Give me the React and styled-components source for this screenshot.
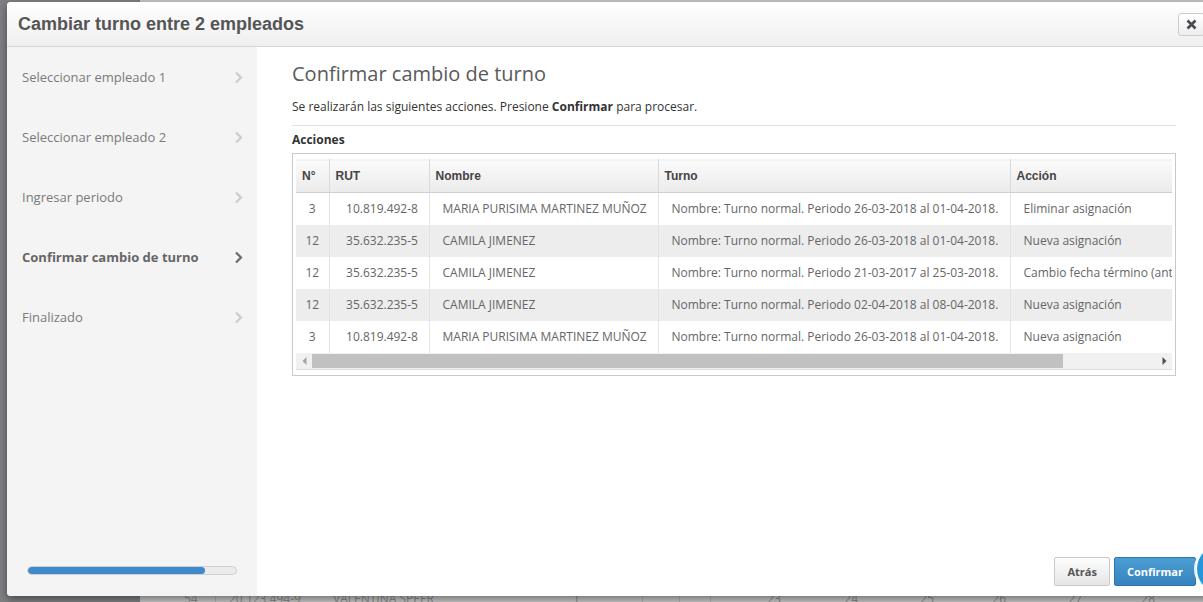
import React from 'react';
import styled, { createGlobalStyle } from 'styled-components';

const GlobalStyle = createGlobalStyle`
  html, body {
    margin: 0;
    padding: 0;
  }
  body {
    width: 1203px;
    height: 602px;
    overflow: hidden;
    font-family: "Open Sans", "Liberation Sans", sans-serif;
  }
  * {
    box-sizing: border-box;
  }
`;

// Página de fondo (bajo el overlay)
const Page = styled.div`
  position: relative;
  display: flex;
  width: 1203px;
  height: 602px;
  overflow: hidden;
  background: #c8c8c8;
`;

const BgSide = styled.div`
  width: 140px;
  flex-shrink: 0;
  background: #7e8083;
`;

const BgContent = styled.div`
  flex: 1;
  display: flex;
  flex-direction: column;
  justify-content: flex-end;
`;

const BgRow = styled.div`
  display: flex;
  height: 16px;
  margin-left: 32px;
  border-top: 1px solid #b6b6b6;
  font-family: "Open Sans", sans-serif;
  font-size: 12px;
  color: #8a8a8a;
  line-height: 23px;
  overflow: hidden;
`;

const BgCell = styled.div`
  width: ${p => p.w}px;
  flex-shrink: 0;
  padding-left: ${p => p.pl || 0}px;
  border-right: ${p => (p.line ? '1px solid #b0b0b0' : 'none')};
  text-align: ${p => p.align || 'left'};
`;

// Modal
const Modal = styled.div`
  position: absolute;
  left: 7px;
  top: 2px;
  width: 1204px;
  height: 594px;
  background: #fff;
  border-radius: 4px;
  box-shadow: 0 3px 9px rgba(0, 0, 0, 0.45);
  display: flex;
  flex-direction: column;
  overflow: hidden;
`;

const Header = styled.div`
  height: 45px;
  flex-shrink: 0;
  display: flex;
  align-items: center;
  justify-content: space-between;
  padding: 0 6px 0 11px;
  background: linear-gradient(#ffffff, #efefef);
  border-bottom: 1px solid #d6d6d6;
`;

const HeaderTitle = styled.h4`
  margin: 0;
  font-family: "Liberation Sans", Arial, sans-serif;
  font-size: 18px;
  font-weight: bold;
  color: #555;
`;

const CloseButton = styled.button`
  width: 27px;
  height: 23px;
  padding: 0;
  margin-top: 1px;
  display: flex;
  align-items: center;
  justify-content: center;
  border: 1px solid #ccc;
  border-radius: 3px;
  background: linear-gradient(#ffffff, #ededed);
`;

const Body = styled.div`
  flex: 1;
  display: flex;
  min-height: 0;
`;

const Sidebar = styled.div`
  width: 250px;
  flex-shrink: 0;
  background: #f4f4f4;
  display: flex;
  flex-direction: column;
  justify-content: space-between;
`;

const StepList = styled.div`
  display: flex;
  flex-direction: column;
`;

const Step = styled.div`
  height: 60px;
  display: flex;
  align-items: center;
  justify-content: space-between;
  padding: 0 14px 0 15px;
  font-size: 13px;
  font-weight: ${p => (p.active ? 700 : 400)};
  color: ${p => (p.active ? '#666' : '#7a7a7a')};
`;

const Progress = styled.div`
  margin: 0 20px 21px;
  height: 9px;
  border: 1px solid #cfcfcf;
  border-radius: 5px;
  background: #ebebeb;
  overflow: hidden;
`;

const ProgressFill = styled.div`
  height: 100%;
  background: #3d89c9;
  border-radius: 4px;
`;

const Main = styled.div`
  flex: 1;
  display: flex;
  flex-direction: column;
  min-width: 0;
`;

const Content = styled.div`
  padding: 15px 35px 0;
`;

const Title = styled.h3`
  margin: 0;
  font-size: 20px;
  line-height: 24px;
  font-weight: 400;
  color: #5a5a5a;
`;

const Lead = styled.p`
  margin: 12px 0 0;
  font-size: 12px;
  line-height: 18px;
  color: #333;
`;

const Rule = styled.hr`
  margin: 9px 0 0;
  border: 0;
  border-top: 1px solid #e2e2e2;
`;

const SectionLabel = styled.div`
  margin-top: 6px;
  font-size: 12px;
  line-height: 16px;
  font-weight: 700;
  color: #333;
`;

const TableBox = styled.div`
  margin-top: 5px;
  border: 1px solid #c9c9c9;
  padding: 5px 3px 5px;
`;

const TableScroll = styled.div`
  overflow: hidden;
`;

const Table = styled.table`
  width: 990px;
  border-collapse: collapse;
  table-layout: fixed;
`;

const Th = styled.th`
  height: 33px;
  padding: 0 6px;
  text-align: left;
  font-family: "Liberation Sans", Arial, sans-serif;
  font-size: 12px;
  font-weight: bold;
  color: #444;
  background: linear-gradient(#fbfbfb, #ebebeb);
  border-right: 1px solid #dadada;
  border-bottom: 1px solid #cfcfcf;
  border-top: 1px solid #f4f4f4;
`;

const Tr = styled.tr`
  background: ${p => (p.striped ? '#ededed' : '#fff')};
`;

const Td = styled.td`
  height: 32px;
  padding: 0 ${p => (p.center ? 4 : 13)}px 0 ${p => p.pl || (p.center ? 4 : 13)}px;
  text-align: ${p => (p.center ? 'center' : 'left')};
  font-size: 12px;
  color: #666;
  white-space: nowrap;
  overflow: hidden;
  border-right: 1px solid #e3e3e3;
`;

const ScrollBar = styled.div`
  height: 17px;
  display: flex;
  align-items: center;
  background: #f1f1f1;
  border-bottom: 1px solid #dcdcdc;
`;

const ScrollArrow = styled.div`
  width: 16px;
  height: 100%;
  display: flex;
  align-items: center;
  justify-content: center;
`;

const ScrollTrack = styled.div`
  flex: 1;
  height: 100%;
  display: flex;
  align-items: center;
`;

const ScrollThumb = styled.div`
  height: 14px;
  background: #c1c1c1;
`;

const Footer = styled.div`
  margin-top: auto;
  display: flex;
  justify-content: flex-end;
  gap: 4px;
  padding: 0 15px 10px;
`;

const Button = styled.button`
  height: 29px;
  padding: 0 12px;
  font-family: "Open Sans", sans-serif;
  font-size: 11px;
  font-weight: 700;
  border-radius: 2px;
  border: 1px solid ${p => (p.primary ? '#2f73aa' : '#cacaca')};
  color: ${p => (p.primary ? '#fff' : '#555')};
  background: ${p =>
    p.primary
      ? 'linear-gradient(#4b9ed3, #3683bf)'
      : 'linear-gradient(#fdfdfd, #e6e6e6)'};
`;

const HelpBubble = styled.div`
  position: absolute;
  left: 1197px;
  top: 545px;
  width: 48px;
  height: 48px;
  border-radius: 50%;
  background: #2596db;
  box-shadow: -1px 0 0 2px rgba(255, 255, 255, 0.9);
`;

const Chevron = ({ color }) => (
  <svg width="9" height="13" viewBox="0 0 9 13">
    <path d="M2 1.5l5 5-5 5" fill="none" stroke={color} strokeWidth="2.2" />
  </svg>
);

const CloseIcon = () => (
  <svg width="11" height="11" viewBox="0 0 11 11">
    <path d="M1.5 1.5l8 8M9.5 1.5l-8 8" stroke="#4a4a52" strokeWidth="2.6" />
  </svg>
);

const Triangle = ({ dir, color }) => (
  <svg width="5" height="8" viewBox="0 0 5 8">
    <path d={dir === 'left' ? 'M4.5 0v8L0.5 4z' : 'M0.5 0v8L4.5 4z'} fill={color} />
  </svg>
);

const steps = [
  'Seleccionar empleado 1',
  'Seleccionar empleado 2',
  'Ingresar periodo',
  'Confirmar cambio de turno',
  'Finalizado',
];

const rows = [
  ['3', '10.819.492-8', 'MARIA PURISIMA MARTINEZ MUÑOZ', 'Nombre: Turno normal. Periodo 26-03-2018 al 01-04-2018.', 'Eliminar asignación'],
  ['12', '35.632.235-5', 'CAMILA JIMENEZ', 'Nombre: Turno normal. Periodo 26-03-2018 al 01-04-2018.', 'Nueva asignación'],
  ['12', '35.632.235-5', 'CAMILA JIMENEZ', 'Nombre: Turno normal. Periodo 21-03-2017 al 25-03-2018.', 'Cambio fecha término (anterior)'],
  ['12', '35.632.235-5', 'CAMILA JIMENEZ', 'Nombre: Turno normal. Periodo 02-04-2018 al 08-04-2018.', 'Nueva asignación'],
  ['3', '10.819.492-8', 'MARIA PURISIMA MARTINEZ MUÑOZ', 'Nombre: Turno normal. Periodo 26-03-2018 al 01-04-2018.', 'Nueva asignación'],
];

const App = () => {
  const activeStep = 3;

  return (
    <>
      <GlobalStyle />
      <Page>
        <BgSide />
        <BgContent>
          <BgRow>
            <BgCell w={44} pl={12} line>54</BgCell>
            <BgCell w={117} pl={13}>20.123.494-9</BgCell>
            <BgCell w={240}>VALENTINA SPEER</BgCell>
            <BgCell w={70} line>1</BgCell>
            <BgCell w={37} line />
            <BgCell w={31} line />
            <BgCell w={70} align="right">23</BgCell>
            <BgCell w={77} align="right">24</BgCell>
            <BgCell w={76} align="right">25</BgCell>
            <BgCell w={72} align="right">26</BgCell>
            <BgCell w={76} align="right">27</BgCell>
            <BgCell w={73} align="right">28</BgCell>
          </BgRow>
        </BgContent>

        <Modal>
          <Header>
            <HeaderTitle>Cambiar turno entre 2 empleados</HeaderTitle>
            <CloseButton>
              <CloseIcon />
            </CloseButton>
          </Header>
          <Body>
            <Sidebar>
              <StepList>
                {steps.map((s, i) => (
                  <Step key={s} active={i === activeStep}>
                    {s}
                    <Chevron color={i === activeStep ? '#6a6a6a' : '#cccccc'} />
                  </Step>
                ))}
              </StepList>
              <Progress>
                <ProgressFill style={{ width: '85%' }} />
              </Progress>
            </Sidebar>

            <Main>
              <Content>
                <Title>Confirmar cambio de turno</Title>
                <Lead>
                  Se realizarán las siguientes acciones. Presione <b>Confirmar</b> para procesar.
                </Lead>
                <Rule />
                <SectionLabel>Acciones</SectionLabel>
                <TableBox>
                  <TableScroll>
                    <Table>
                      <colgroup>
                        <col style={{ width: 33 }} />
                        <col style={{ width: 100 }} />
                        <col style={{ width: 229 }} />
                        <col style={{ width: 352 }} />
                        <col style={{ width: 276 }} />
                      </colgroup>
                      <thead>
                        <tr>
                          <Th>N°</Th>
                          <Th>RUT</Th>
                          <Th>Nombre</Th>
                          <Th>Turno</Th>
                          <Th>Acción</Th>
                        </tr>
                      </thead>
                      <tbody>
                        {rows.map((r, i) => (
                          <Tr key={i} striped={i % 2 === 1}>
                            <Td center>{r[0]}</Td>
                            <Td center pl={10}>{r[1]}</Td>
                            <Td>{r[2]}</Td>
                            <Td>{r[3]}</Td>
                            <Td>{r[4]}</Td>
                          </Tr>
                        ))}
                      </tbody>
                    </Table>
                  </TableScroll>
                  <ScrollBar>
                    <ScrollArrow>
                      <Triangle dir="left" color="#a3a3a3" />
                    </ScrollArrow>
                    <ScrollTrack>
                      <ScrollThumb style={{ width: '89%' }} />
                    </ScrollTrack>
                    <ScrollArrow>
                      <Triangle dir="right" color="#505050" />
                    </ScrollArrow>
                  </ScrollBar>
                </TableBox>
              </Content>
              <Footer>
                <Button>Atrás</Button>
                <Button primary>Confirmar</Button>
              </Footer>
            </Main>
          </Body>
        </Modal>
        <HelpBubble />
      </Page>
    </>
  );
};

export default App;
